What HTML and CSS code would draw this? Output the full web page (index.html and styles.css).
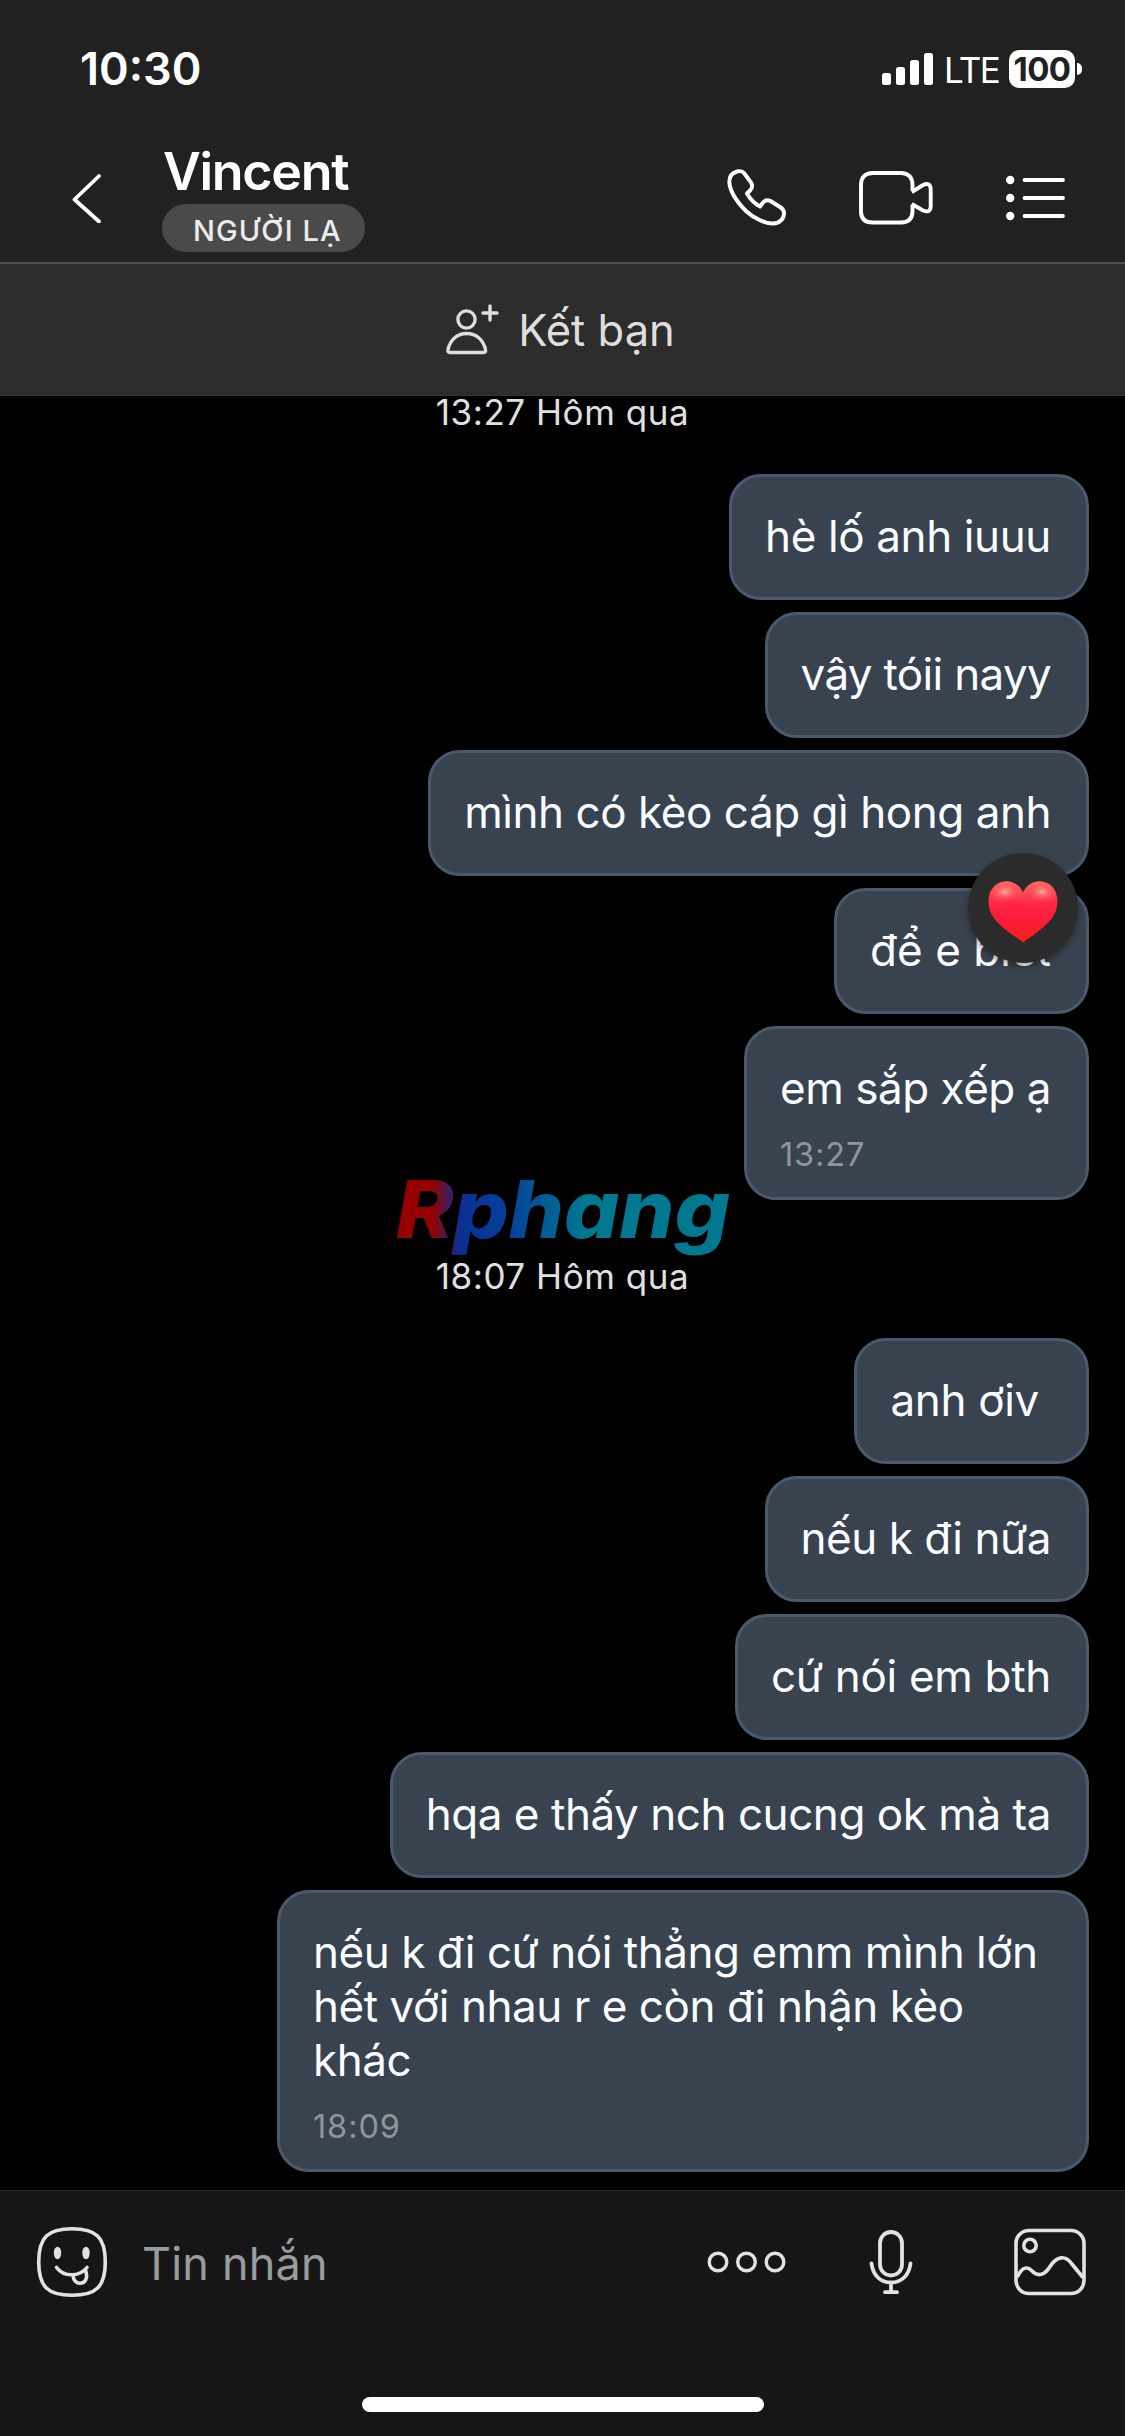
FILE: index.html
```html
<!DOCTYPE html>
<html lang="vi">
<head>
<meta charset="utf-8">
<title>Vincent</title>
<link rel="stylesheet" href="styles.css">
</head>
<body>
<div class="phone">
  <div class="status">
    <span class="clock">10:30</span>
    <div class="status-right">
      <svg class="signal" width="51" height="32" viewBox="0 0 51 32" fill="#fff"><rect y="20" width="9" height="12" rx="2.5"/><rect x="14" y="14" width="9" height="18" rx="2.5"/><rect x="28" y="7" width="9" height="25" rx="2.5"/><rect x="42" width="9" height="32" rx="2.5"/></svg>
      <span class="network">LTE</span>
      <span class="battery">100</span>
      <span class="battery-tip"></span>
    </div>
  </div>

  <header class="header">
    <svg class="back" width="32" height="50" viewBox="0 0 32 50" fill="none" stroke="#fff" stroke-width="3.8" stroke-linecap="round" stroke-linejoin="round"><path d="M28 3 3.500 26.500 28 48.500"/></svg>
    <div class="contact">
      <div class="name">Vincent</div>
      <div class="tag">NGƯỜI LẠ</div>
    </div>
    <div class="actions">
      <svg width="60" height="58" viewBox="0 0 60 58" fill="none" stroke="#fff" stroke-width="3.900" stroke-linejoin="round"><path d="M17 4C15.500 2 13 1.800 10 2.500C5 3.800 2.300 7.500 2.300 13C3 23 10 33 19 42C27 49.500 38 54.500 46 54.500C52 54.500 56.500 50.500 57 45C57.300 41.500 55.500 39.500 53 38L43.500 32C40.500 30.600 38 31.200 36 33.500L33 37.500C27.500 34.500 22.500 29 20 24.500L23 21.500C25.500 19 25.800 16.500 24 13.500Z"/></svg>
      <svg width="75" height="54" viewBox="0 0 75 54" fill="none" stroke="#fff" stroke-width="3.900"><path d="M53.500 19.800V14C53.500 6.500 49.500 2 42 2H13.500C6 2 2 6.500 2 14v26.500C2 48 6 51.500 13.500 51.500H42c7.500 0 11.500-4 11.500-11.500v-6.300"/><path d="M52.800 21 64 14C69 11.800 71.500 13.300 71.700 18v17.500c-.2 4.500-2.700 6-7.700 4L52.800 33"/></svg>
      <svg width="60" height="46" viewBox="0 0 60 46" fill="#fff" stroke="#fff" stroke-width="3.800" stroke-linecap="round"><g stroke="none"><circle cx="4.200" cy="5" r="4.200"/><circle cx="4.200" cy="23" r="4.200"/><circle cx="4.200" cy="41" r="4.200"/></g><path d="M18.500 5H57M18.500 23H57M18.500 41H57"/></svg>
    </div>
  </header>

  <div class="add-friend">
    <svg width="54" height="54" viewBox="0 0 54 54" fill="none" stroke="#dedede" stroke-width="3.400" stroke-linecap="round" stroke-linejoin="round"><circle cx="21.500" cy="16.500" r="8.600"/><path d="M5 49.500h33.500c1.700 0 2.500-1 2-2.800C38.500 37 31.500 30.500 21.700 30.500S5 37 3 46.700c-.5 1.800.3 2.800 2 2.800Z"/><path d="M45 3v14M38 10h14"/></svg>
    <span>Kết bạn</span>
  </div>

  <main class="chat">
    <div class="date">13:27 Hôm qua</div>
    <div class="stack">
      <div class="bubble track-a">hè lố anh iuuu</div>
      <div class="bubble track-b">vậy tóii nayy</div>
      <div class="bubble track-c">mình có kèo cáp gì hong anh</div>
      <div class="bubble track-d">để e biết
        <span class="reaction"><svg width="72" height="64" viewBox="0 0 72 64"><defs><linearGradient id="heart" x1="0" y1="0" x2="0" y2="1"><stop offset="0" stop-color="#ff6a62"/><stop offset=".38" stop-color="#ff2545"/><stop offset=".7" stop-color="#fb1a32"/><stop offset="1" stop-color="#f02417"/></linearGradient><radialGradient id="shine"><stop offset="0" stop-color="#ffb09c" stop-opacity=".95"/><stop offset="1" stop-color="#ff4a55" stop-opacity="0"/></radialGradient></defs><path d="M36 62.500C31 58 16 50 6.500 37.500C-1.500 26 .5 10 10 4C20-2 31 2 36 12.500C41 2 52-2 62 4C71.500 10 73.500 26 65.500 37.500C56 50 41 58 36 62.500Z" fill="url(#heart)"/><ellipse cx="18" cy="12" rx="14" ry="10" fill="url(#shine)"/><ellipse cx="55" cy="12" rx="14" ry="10" fill="url(#shine)"/></svg></span>
      </div>
      <div class="bubble timed track-e">em sắp xếp ạ<time>13:27</time></div>
    </div>
    <div class="date later">18:07 Hôm qua</div>
    <div class="stack">
      <div class="bubble track-f">anh ơiv&nbsp;</div>
      <div class="bubble track-e">nếu k đi nữa</div>
      <div class="bubble track-f">cứ nói em bth</div>
      <div class="bubble track-c">hqa e thấy nch cucng ok mà ta</div>
      <div class="bubble timed long track-c">nếu k đi cứ nói thẳng emm mình lớn hết với nhau r e còn đi nhận kèo khác<time>18:09</time></div>
    </div>
    <svg class="watermark" width="350" height="96" viewBox="0 0 350 96"><defs><linearGradient id="brand" gradientUnits="userSpaceOnUse" x1="0" y1="0" x2="350" y2="0"><stop offset=".12" stop-color="#960000"/><stop offset=".2" stop-color="#0c2e93"/><stop offset=".33" stop-color="#04409a"/><stop offset=".56" stop-color="#00788f"/></linearGradient></defs><text x="6" y="68" textLength="334" lengthAdjust="spacingAndGlyphs" fill="url(#brand)">Rphang</text></svg>
  </main>

  <footer class="composer">
    <div class="composer-row">
      <svg class="sticker" width="72" height="72" viewBox="0 0 72 72" fill="none" stroke="#e2e2e2" stroke-width="3.600" stroke-linecap="round"><path d="M36 2.700C60 2.700 69.300 11 69.300 36S60 69.300 36 69.300 2.700 61 2.700 36 12 2.700 36 2.700Z"/><g fill="#e2e2e2" stroke="none"><ellipse cx="21.500" cy="27" rx="3.700" ry="6.200"/><ellipse cx="50" cy="27" rx="3.700" ry="6.200"/></g><path d="M20.500 41.500C28 51.500 43.500 51 51 41.500M37 49.500C37.500 54.500 40.500 57.200 44 57.200 49.500 57.200 52 52 49.800 45"/></svg>
      <span class="placeholder">Tin nhắn</span>
      <div class="tools">
        <svg width="80" height="24" viewBox="0 0 80 24" fill="none" stroke="#e2e2e2" stroke-width="3.400"><circle cx="11" cy="12" r="8.800"/><circle cx="39.500" cy="12" r="8.800"/><circle cx="68" cy="12" r="8.800"/></svg>
        <svg width="46" height="66" viewBox="0 0 46 66" fill="none" stroke="#e2e2e2" stroke-width="3.800" stroke-linecap="round"><rect x="12" y="3" width="22" height="43.500" rx="11"/><path d="M3.500 34.500C5 46.500 12.500 53.500 23 53.500S41 46.500 42.500 34.500M23 53.500V63M17 63.200h12"/></svg>
        <svg width="72" height="68" viewBox="0 0 72 68" fill="none" stroke="#e2e2e2" stroke-width="3.600" stroke-linejoin="round"><rect x="2" y="2.500" width="68" height="63" rx="13"/><circle cx="16" cy="17.500" r="6.200"/><path d="M3 49 6.500 43.500C9.500 39.500 14 38.500 17.500 42.500C24 49.500 31 47 36 38.500C43 28 51 27 57.500 35.500L69 49.500"/></svg>
      </div>
    </div>
    <div class="home"></div>
  </footer>
</div>
</body>
</html>
```
FILE: styles.css
```css
* { box-sizing: border-box; }
body { margin: 0; background: #000; font-family: Inter, "Liberation Sans", sans-serif; color: #fff; }
svg { display: block; flex: none; }
.phone { width: 1125px; height: 2436px; display: flex; flex-direction: column; overflow: hidden; }

.status { height: 138px; flex: none; background: #212121; display: flex; align-items: center; justify-content: space-between; padding: 0 43px 0 80px; }
.clock { font-size: 45px; font-weight: 600; line-height: 54px; }
.status-right { display: flex; align-items: center; }
.network { font-size: 35px; line-height: 40px; letter-spacing: -1.6px; margin: 2px 0 0 11px; width: 65px; }
.battery { width: 66px; height: 38px; border-radius: 10px; background: #fff; color: #212121; font-size: 33px; font-weight: 700; line-height: 38px; letter-spacing: -.6px; text-align: center; }
.battery-tip { width: 5px; height: 12px; margin-left: 2px; background: #fff; border-radius: 0 5px 5px 0; }

.header { height: 126px; flex: none; background: #212121; border-bottom: 2px solid #4d4d4d; display: flex; align-items: center; padding: 0 59px 5px 71px; }
.contact { margin: -2px 0 0 59px; display: flex; flex-direction: column; align-items: flex-start; gap: 3px; }
.name { font-size: 52px; font-weight: 600; line-height: 59px; letter-spacing: -1.3px; padding-left: 1px; }
.tag { height: 48px; width: 203px; border-radius: 24px; background: #4a4a4a; color: #ececec; font-size: 29px; font-weight: 500; line-height: 53px; letter-spacing: 1.1px; padding-left: 31px; white-space: nowrap; }
.actions { margin-left: auto; display: flex; align-items: center; gap: 72px; }

.add-friend { height: 132px; flex: none; background: #2c2c2c; border-bottom: 1px solid #363636; display: flex; align-items: center; justify-content: center; gap: 19px; padding-right: 5px; color: #dedede; font-size: 43.500px; line-height: 54px; }

.chat { position: relative; height: 1794px; flex: none; background: #000; padding-right: 36px; }
.date { width: 1125px; height: 32px; margin-bottom: 46px; text-align: center; font-size: 35px; line-height: 32px; letter-spacing: .55px; color: #e0e0e0; }
.date.later { margin-top: 60px; }
.stack { display: flex; flex-direction: column; align-items: flex-end; gap: 12px; }
.bubble { position: relative; max-width: 812px; background: #38434f; border: 3px solid #4b596d; border-radius: 32px; padding: 32px 35px 34px 33px; font-size: 44px; line-height: 54px; color: #fafcff; }
.bubble time { display: block; margin-top: 20px; font-size: 32.500px; line-height: 40px; letter-spacing: .9px; color: #8f959a; }
.timed { padding-bottom: 22px; }
.long { width: 812px; }
.track-a { letter-spacing: -.38px; }
.track-b { letter-spacing: -.68px; }
.track-c { letter-spacing: -.46px; }
.track-d { letter-spacing: .03px; }
.track-e { letter-spacing: -.46px; }
.track-f { letter-spacing: -.32px; }
.reaction { position: absolute; right: 8px; top: -38px; width: 110px; height: 110px; border-radius: 50%; background: #2b2b2b; box-shadow: 0 3px 7px rgba(0, 0, 0, .35); display: flex; align-items: center; justify-content: center; padding-top: 8px; z-index: 2; }
.watermark { position: absolute; left: 390px; top: 774px; overflow: visible; font-size: 80px; font-weight: 800; font-style: italic; }

.composer { height: 246px; flex: none; background: #161616; border-top: 1px solid #2b2b2b; }
.composer-row { height: 142px; display: flex; align-items: center; padding: 0 39px 0 36px; }
.placeholder { margin: 4px 0 0 34px; font-size: 45px; line-height: 54px; letter-spacing: .2px; color: #969c9f; }
.tools { margin-left: auto; display: flex; align-items: center; }
.tools svg + svg { margin-left: 81px; }
.tools svg:last-child { margin-left: 100px; }
.home { width: 402px; height: 15px; margin: 64px auto 0; border-radius: 8px; background: #fff; }
```
